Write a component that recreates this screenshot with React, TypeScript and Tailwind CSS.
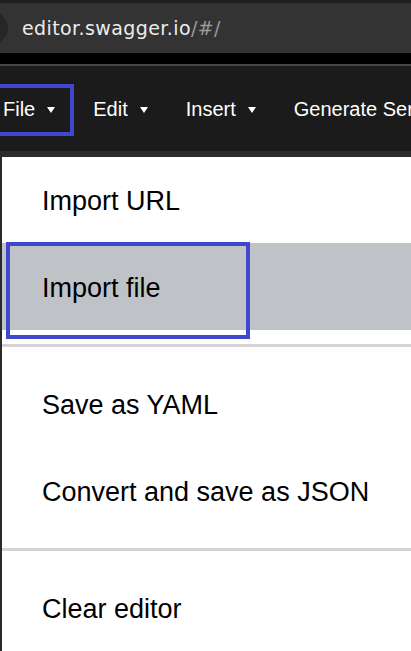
import React from "react";

function Caret() {
  return (
    <svg width="8" height="6" viewBox="0 0 8 6" className="ml-[12px] mt-[3px]">
      <polygon points="0,0 8,0 4,6" fill="#ffffff" />
    </svg>
  );
}

export default function App() {
  const font = { fontFamily: '"Liberation Sans", Arial, sans-serif' };
  return (
    <div className="w-[411px] h-[651px] overflow-hidden bg-[#1b1b1b] flex flex-col" style={font}>
      <div className="h-[3px] bg-[#1f1f1f] shrink-0" />
      <div className="h-[50px] bg-[#333333] flex items-center shrink-0 overflow-hidden">
        <div className="w-[32px] h-[32px] rounded-full bg-[#262626] -ml-[24px] shrink-0" />
        <div
          className="ml-[14px] text-[19px] leading-none tracking-[0.4px] text-[#ececec] whitespace-nowrap"
          style={{ fontFamily: '"DejaVu Sans", "Noto Sans", sans-serif' }}
        >
          editor.swagger.io<span className="text-[#9a9a9a]">/#/</span>
        </div>
      </div>
      <div className="h-[11px] bg-black shrink-0" />
      <div className="h-[2px] bg-[#474747] shrink-0" />
      <div className="h-[85px] bg-[#1b1b1b] shrink-0 relative flex items-center pl-[3px] gap-[38px] text-[20px] leading-none text-white whitespace-nowrap overflow-hidden">
        <div className="flex items-center">
          <span>File</span>
          <Caret />
        </div>
        <div className="flex items-center">
          <span>Edit</span>
          <Caret />
        </div>
        <div className="flex items-center">
          <span>Insert</span>
          <Caret />
        </div>
        <div className="flex items-center">
          <span>Generate Server</span>
        </div>
        <div className="absolute left-[-10px] top-[18px] w-[84px] h-[52px] border-[4px] border-[#3f48cc]" />
      </div>
      <div className="h-[6px] bg-[#2b2b2b] shrink-0" />
      <div className="flex-1 bg-white border-l-2 border-[#2a2a2a] relative flex flex-col text-[27px] leading-none text-black">
        <div className="h-[86px] shrink-0 flex items-center pt-[3px] pl-[40px]">Import URL</div>
        <div className="h-[87px] shrink-0 flex items-center pt-[3px] pl-[40px] bg-[#bfc3c7]">Import file</div>
        <div className="h-[3px] bg-[#d4d4d4] mt-[14px] mb-[13px] shrink-0" />
        <div className="h-[87px] shrink-0 flex items-center pt-[3px] pl-[40px]">Save as YAML</div>
        <div className="h-[87px] shrink-0 flex items-center pt-[3px] pl-[40px]">Convert and save as JSON</div>
        <div className="h-[3px] bg-[#d4d4d4] mt-[14px] mb-[13px] shrink-0" />
        <div className="h-[87px] shrink-0 flex items-center pt-[3px] pl-[40px]">Clear editor</div>
        <div className="absolute left-[4px] top-[85px] w-[244px] h-[97px] border-[4px] border-[#3f48cc]" />
      </div>
    </div>
  );
}
